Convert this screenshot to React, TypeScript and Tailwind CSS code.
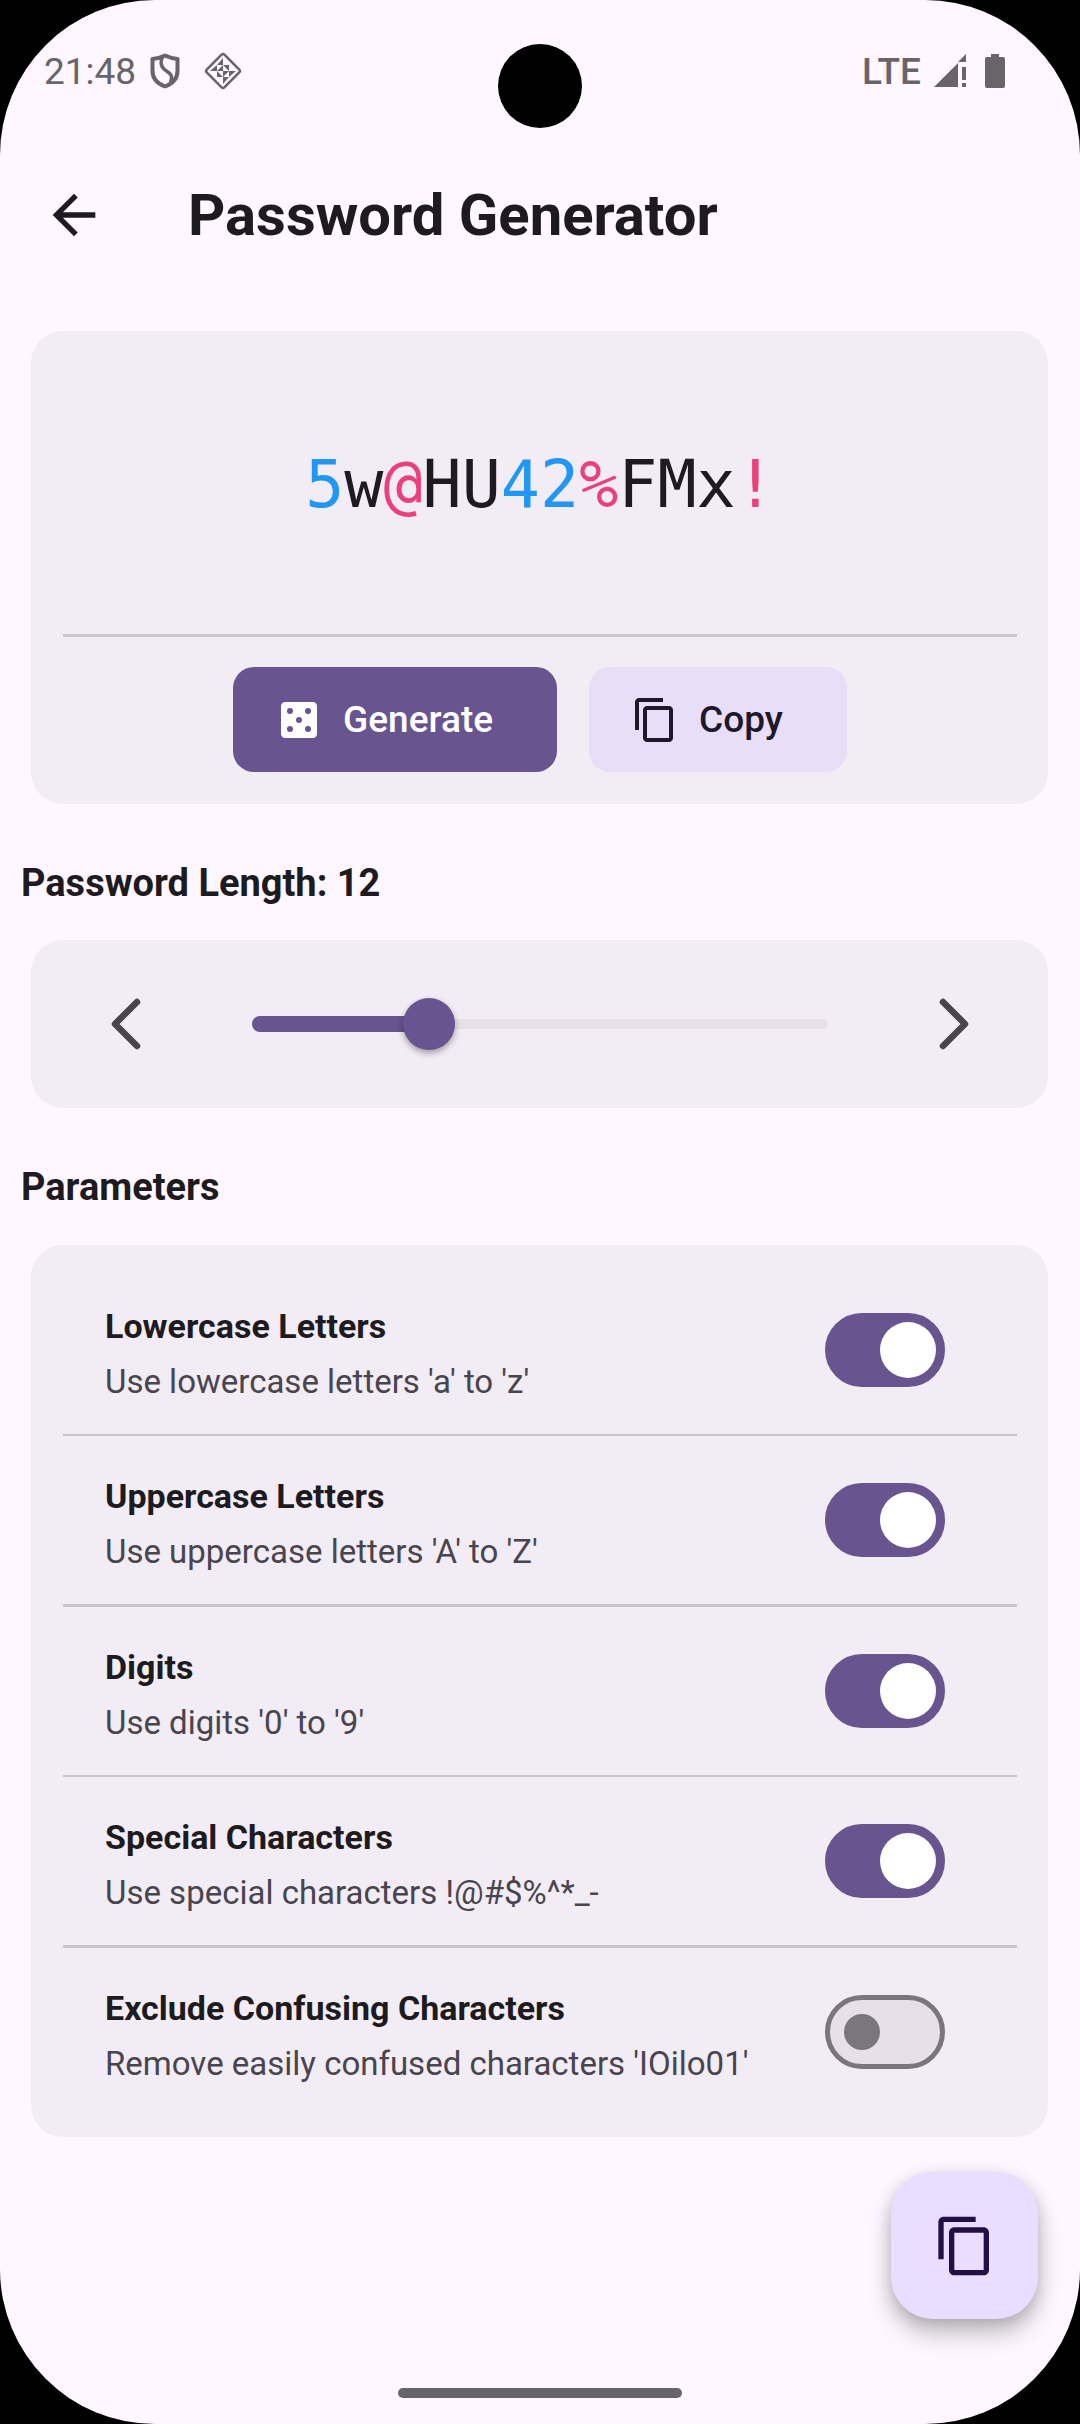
import { useState, type ReactNode } from "react";

function ShieldIcon() {
  return (
    <svg viewBox="0 0 30 36" className="h-9 w-[30px]" fill="none" stroke="currentColor" aria-hidden="true">
      <path d="M15 2.500c4 2 8 3 12.500 3.500v12c0 7-4.500 12.500-12.500 15.500C7 30.500 2.500 25 2.500 18V6C7 5.500 11 4.500 15 2.500z" strokeWidth="4" strokeLinejoin="round" />
      <path d="M12.500 4c-2.500 5-2 9 2 12.500s7.500 4 7 8c0 2-.500 3-1 5" strokeWidth="3.500" />
    </svg>
  );
}

function DiamondIcon() {
  return (
    <svg viewBox="-19 -19 38 38" className="size-[38px]" aria-hidden="true">
      <rect x="-12.500" y="-12.500" width="25" height="25" rx="2" transform="rotate(45)" fill="none" stroke="currentColor" strokeWidth="2.500" />
      <path
        fill="currentColor"
        d="M0-13v7h-6zM-6-6v6h-7zM0-6v6h-6zM0-6h6v6zM-6 0v6h6zM0 0h6L0 6zM6 0h7L6 6zM0 6h6L0 13z"
      />
    </svg>
  );
}

function SignalIcon() {
  return (
    <svg viewBox="0 0 34 34" className="size-[34px]" fill="currentColor" aria-hidden="true">
      <path d="M25 9v24H1zM33 0v8h-8zM29 13h4v13h-4zM29 29h4v4h-4z" />
    </svg>
  );
}

function BatteryIcon() {
  return (
    <svg viewBox="0 0 20 34" className="h-[34px] w-5" fill="currentColor" aria-hidden="true">
      <path d="M6 0h8v3h4a2 2 0 0 1 2 2v27a2 2 0 0 1-2 2H2a2 2 0 0 1-2-2V5a2 2 0 0 1 2-2h4z" />
    </svg>
  );
}

function CopyIcon({ className }: { className: string }) {
  return (
    <svg viewBox="0 0 24 24" className={className} fill="currentColor" aria-hidden="true">
      <path d="M16 1H4c-1.100 0-2 .9-2 2v14h2V3h12V1zm3 4H8c-1.100 0-2 .9-2 2v14c0 1.100.9 2 2 2h11c1.100 0 2-.9 2-2V7c0-1.100-.9-2-2-2zm0 16H8V7h11v14z" />
    </svg>
  );
}

function DiceIcon() {
  return (
    <svg viewBox="0 0 24 24" className="size-12" fill="currentColor" aria-hidden="true">
      <path
        fillRule="evenodd"
        d="M19 3H5c-1.100 0-2 .9-2 2v14c0 1.100.9 2 2 2h14c1.100 0 2-.9 2-2V5c0-1.100-.9-2-2-2zM7.500 18a1.500 1.500 0 1 1 0-3 1.500 1.500 0 0 1 0 3zm0-9a1.500 1.500 0 1 1 0-3 1.500 1.500 0 0 1 0 3zm4.500 4.500a1.500 1.500 0 1 1 0-3 1.500 1.500 0 0 1 0 3zm4.500 4.500a1.500 1.500 0 1 1 0-3 1.500 1.500 0 0 1 0 3zm0-9a1.500 1.500 0 1 1 0-3 1.500 1.500 0 0 1 0 3z"
      />
    </svg>
  );
}

function Card({ children, className }: { children: ReactNode; className: string }) {
  return <div className={`mr-8 ml-[31px] rounded-[32px] bg-[#f2ecf4] pr-[31px] pl-8 ${className}`}>{children}</div>;
}

const SETS = {
  lower: "abcdefghijklmnopqrstuvwxyz",
  upper: "ABCDEFGHIJKLMNOPQRSTUVWXYZ",
  digits: "0123456789",
  special: "!@#$%^*_-",
};

const PARAMETERS = [
  { id: "lower", title: "Lowercase Letters", detail: "Use lowercase letters 'a' to 'z'", divider: "border-b-2" },
  { id: "upper", title: "Uppercase Letters", detail: "Use uppercase letters 'A' to 'Z'", divider: "border-b-3" },
  { id: "digits", title: "Digits", detail: "Use digits '0' to '9'", divider: "border-b-2" },
  { id: "special", title: "Special Characters", detail: "Use special characters !@#$%^*_-", divider: "border-b-3" },
  { id: "exclude", title: "Exclude Confusing Characters", detail: "Remove easily confused characters 'IOilo01'", divider: "" },
];

const MIN = 4;
const MAX = 30;

function charColor(c: string) {
  if (/[0-9]/.test(c)) return "text-[#2196f3]";
  if (/[a-zA-Z]/.test(c)) return "text-[#1d1b20]";
  return "text-[#ec407a]";
}

export default function App() {
  const [password, setPassword] = useState("5w@HU42%FMx!");
  const [length, setLength] = useState(12);
  const [enabled, setEnabled] = useState<Record<string, boolean>>({
    lower: true,
    upper: true,
    digits: true,
    special: true,
    exclude: false,
  });

  const changeLength = (n: number) => setLength(Math.min(MAX, Math.max(MIN, n)));
  const copy = () => navigator.clipboard?.writeText(password);
  const generate = () => {
    let pool = Object.entries(SETS)
      .filter(([id]) => enabled[id])
      .map(([, chars]) => chars)
      .join("");
    if (enabled.exclude) pool = pool.replace(/[IOilo01]/g, "");
    if (!pool) return;
    setPassword(Array.from({ length }, () => pool[Math.floor(Math.random() * pool.length)]).join(""));
  };

  return (
    <div className="bg-black font-[Roboto,sans-serif] text-[#1d1b20]">
      <div className="relative flex min-h-screen flex-col rounded-[155px] bg-[#fef7ff]">
        <div className="absolute top-11 left-1/2 size-[84px] -translate-x-1/2 rounded-full bg-black" />

        <div className="flex h-[142px] items-center justify-between pr-[75px] pl-11 text-[37px] leading-none text-[#67646a]">
          <div className="flex items-center">
            <span>21:48</span>
            <span className="ml-3.5">
              <ShieldIcon />
            </span>
            <span className="ml-6">
              <DiamondIcon />
            </span>
          </div>
          <div className="flex items-center">
            <span className="font-medium">LTE</span>
            <span className="ml-3">
              <SignalIcon />
            </span>
            <span className="ml-[18px]">
              <BatteryIcon />
            </span>
          </div>
        </div>

        <header className="flex h-[145px] items-center pl-[42px]">
          <button type="button" aria-label="Back" className="mr-[82px] size-16">
            <svg viewBox="0 0 24 24" className="size-16" fill="currentColor" aria-hidden="true">
              <path d="M20 11H7.830l5.590-5.590L12 4l-8 8 8 8 1.410-1.410L7.830 13H20v-2z" />
            </svg>
          </button>
          <h1 className="text-[58px] leading-none font-bold">Password Generator</h1>
        </header>

        <main className="mt-11 grow">
          <Card className="pb-8">
            <output className="flex h-[306px] items-center justify-center border-b-3 border-[#cac4cf] pt-1 text-[65px] leading-none font-[DejaVu_Sans_Mono,monospace]">
              <span>
                {[...password].map((c, i) => (
                  <span key={i} className={charColor(c)}>
                    {c}
                  </span>
                ))}
              </span>
            </output>
            <div className="mt-[30px] flex justify-center gap-8 text-[37px] leading-none font-medium">
              <button
                type="button"
                onClick={generate}
                className="flex h-[105px] items-center gap-5 rounded-[21px] bg-[#68548e] pr-16 pl-[42px] text-white"
              >
                <DiceIcon />
                Generate
              </button>
              <button
                type="button"
                onClick={copy}
                className="flex h-[105px] items-center gap-5 rounded-[21px] bg-[#e8def8] pr-16 pl-[42px] text-[#1e182b]"
              >
                <CopyIcon className="size-12" />
                Copy
              </button>
            </div>
          </Card>

          <label htmlFor="length" className="mt-[55px] ml-[21px] block text-[38px] leading-[48px] font-bold">
            Password Length: {length}
          </label>

          <Card className="mt-[33px] flex h-[168px] items-center">
            <button type="button" aria-label="Shorter" onClick={() => changeLength(length - 1)} className="flex w-[126px] justify-center text-[#49454e]">
              <svg viewBox="0 0 30 52" className="h-[52px] w-[30px]" fill="none" stroke="currentColor" strokeWidth="6.500" strokeLinecap="round" strokeLinejoin="round" aria-hidden="true">
                <path d="M26 4L4 26l22 22" />
              </svg>
            </button>
            <div className="relative mx-[63px] flex h-[52px] flex-1 items-center">
              <div className="h-2.5 w-full rounded-full bg-[#e7e0e8]" />
              <div
                className="absolute left-0 h-4 rounded-full bg-[#68548e]"
                style={{ width: `${((length - MIN) / (MAX - MIN)) * 100}%` }}
              />
              <input
                id="length"
                type="range"
                min={MIN}
                max={MAX}
                value={length}
                onChange={(e) => changeLength(Number(e.target.value))}
                className="absolute -inset-x-[26px] inset-y-0 appearance-none bg-transparent [&::-webkit-slider-thumb]:size-[52px] [&::-webkit-slider-thumb]:appearance-none [&::-webkit-slider-thumb]:rounded-full [&::-webkit-slider-thumb]:bg-[#68548e] [&::-webkit-slider-thumb]:shadow-[0_3px_6px_rgba(0,0,0,0.35)]"
              />
            </div>
            <button type="button" aria-label="Longer" onClick={() => changeLength(length + 1)} className="flex w-[126px] justify-center text-[#49454e]">
              <svg viewBox="0 0 30 52" className="h-[52px] w-[30px]" fill="none" stroke="currentColor" strokeWidth="6.500" strokeLinecap="round" strokeLinejoin="round" aria-hidden="true">
                <path d="M4 4l22 22L4 48" />
              </svg>
            </button>
          </Card>

          <h2 className="mt-[55px] ml-[21px] text-[38px] leading-[48px] font-bold">Parameters</h2>

          <Card className="mt-[34px] py-[21px]">
            {PARAMETERS.map((p) => (
              <label key={p.id} className={`block border-[#cac4cf] ${p.divider}`}>
                <span className="flex h-[168px] items-center justify-between pr-[72px] pl-[42px]">
                  <span className="pt-2">
                    <span className="block text-[34px] leading-[55px] font-bold">{p.title}</span>
                    <span className="block text-[33px] leading-[55px] text-[#49454e]">{p.detail}</span>
                  </span>
                  <input
                    type="checkbox"
                    role="switch"
                    checked={enabled[p.id]}
                    onChange={(e) => setEnabled({ ...enabled, [p.id]: e.target.checked })}
                    className="flex h-[74px] w-[120px] shrink-0 appearance-none items-center rounded-full border-5 border-[#7a757f] bg-[#e7e0e8] px-3.5 before:size-9 before:rounded-full before:bg-[#7a757f] checked:justify-end checked:border-[#68548e] checked:bg-[#68548e] checked:px-1 checked:before:size-14 checked:before:bg-white"
                  />
                </span>
              </label>
            ))}
          </Card>
        </main>

        <button
          type="button"
          aria-label="Copy password"
          onClick={copy}
          className="mt-[34px] mr-[42px] flex size-[147px] items-center justify-center self-end rounded-[42px] bg-[#ebddff] text-[#230f46] shadow-[0_15px_24px_rgba(0,0,0,0.22),0_4px_16px_rgba(0,0,0,0.15)]"
        >
          <CopyIcon className="size-16" />
        </button>
        <div className="mt-[69px] mb-[26px] h-2.5 w-[284px] self-center rounded-full bg-[#67646a]" />
      </div>
    </div>
  );
}
